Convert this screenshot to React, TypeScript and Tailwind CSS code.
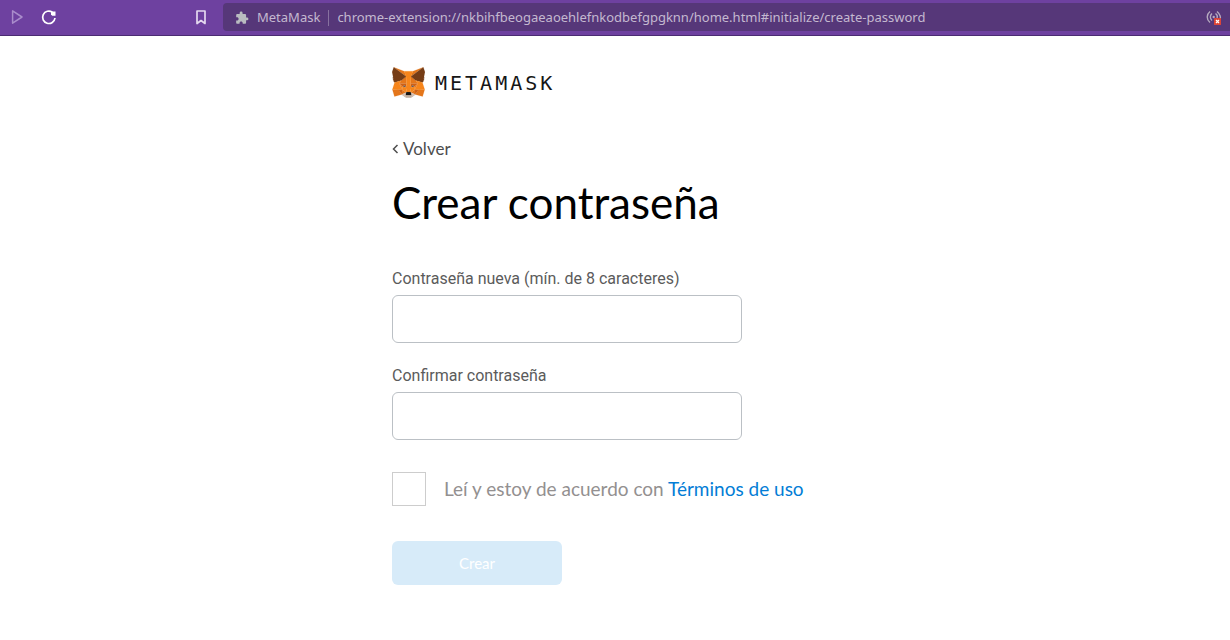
import React, { useState } from 'react'
import { MdExtension } from 'react-icons/md'

const foxShapes = [
  { fill: '#E2761B', points: '274.1,35.5 174.6,109.4 193,65.8' },
  { fill: '#E4761B', points: '44.4,35.5 143.1,110.1 125.6,65.8' },
  { fill: '#E4761B', points: '238.3,206.8 211.8,247.4 268.5,263 284.8,207.7' },
  { fill: '#E4761B', points: '33.9,207.7 50.1,263 106.8,247.4 80.3,206.8' },
  { fill: '#E4761B', points: '103.6,138.2 87.8,162.1 144.1,164.6 142.1,104.1' },
  { fill: '#E4761B', points: '214.9,138.2 175.9,103.4 174.6,164.6 230.8,162.1' },
  { fill: '#E4761B', points: '106.8,247.4 140.6,230.9 111.4,208.1' },
  { fill: '#E4761B', points: '177.9,230.9 211.8,247.4 207.1,208.1' },
  { fill: '#D7C1B3', points: '211.8,247.4 177.9,230.9 180.6,253 180.3,262.3' },
  { fill: '#D7C1B3', points: '106.8,247.4 138.3,262.3 138.1,253 140.6,230.9' },
  {
    fill: '#CD6116',
    points: '230.8,162.1 174.6,164.6 179.8,193.5 188.1,176.1 208.1,185.2',
  },
  {
    fill: '#CD6116',
    points: '110.6,185.2 130.6,176.1 138.8,193.5 144.1,164.6 87.8,162.1',
  },
  { fill: '#6A5B5B', points: '138.8,193.5 110.6,185.2 130.5,176.1' },
  { fill: '#6A5B5B', points: '179.7,193.5 188,176.1 208,185.2' },
  { fill: '#CD6116', points: '106.8,247.4 111.6,206.8 80.3,207.7' },
  { fill: '#CD6116', points: '207,206.8 211.8,247.4 238.3,207.7' },
  { fill: '#E4751F', points: '87.8,162.1 111.4,208.1 110.6,185.2' },
  { fill: '#E4751F', points: '208.1,185.2 207.1,208.1 230.8,162.1' },
  {
    fill: '#F6851B',
    points: '179.8,193.5 173.1,227.6 177.9,230.9 207.1,208.1 208.1,185.2',
  },
  {
    fill: '#F6851B',
    points: '110.6,185.2 111.4,208.1 140.6,230.9 145.4,227.6 138.8,193.5',
  },
  {
    fill: '#C0AD9E',
    points:
      '180.3,262.3 180.6,253 178.1,250.8 140.4,250.8 138.1,253 138.3,262.3 106.8,247.4 117.8,256.4 140.1,271.9 178.4,271.9 200.8,256.4 211.8,247.4',
  },
  {
    fill: '#161616',
    points:
      '177.9,230.9 173.1,227.6 145.4,227.6 140.6,230.9 138.1,253 140.4,250.8 178.1,250.8 180.6,253',
  },
  {
    fill: '#763D16',
    points:
      '278.3,114.2 286.8,73.4 274.1,35.5 177.9,106.9 214.9,138.2 267.2,153.5 278.8,140 273.8,136.4 281.8,129.1 275.6,124.3 283.6,118.2',
  },
  {
    fill: '#763D16',
    points:
      '31.8,73.4 40.3,114.2 34.9,118.2 42.9,124.3 36.8,129.1 44.8,136.4 39.8,140 51.3,153.5 103.6,138.2 140.6,106.9 44.4,35.5',
  },
  {
    fill: '#F6851B',
    points:
      '267.2,153.5 214.9,138.2 230.8,162.1 207.1,208.1 238.3,207.7 284.8,207.7',
  },
  {
    fill: '#F6851B',
    points:
      '103.6,138.2 51.3,153.5 33.9,207.7 80.3,207.7 111.4,208.1 87.8,162.1',
  },
  {
    fill: '#F6851B',
    points:
      '174.6,164.6 177.9,106.9 193.1,65.8 125.6,65.8 140.6,106.9 144.1,164.6 138.8,193.5 145.4,227.6 173.1,227.6 179.8,193.5',
  },
]

const Fox = () => (
  <svg viewBox="31 35 256 238" className="h-[31px] w-[33px]" aria-hidden="true">
    {foxShapes.map((shape) => (
      <polygon
        key={shape.points}
        points={shape.points}
        fill={shape.fill}
        stroke={shape.fill}
        strokeLinejoin="round"
      />
    ))}
  </svg>
)

const BrowserBar = () => (
  <header className="flex h-9 items-center border-b border-[#4b2c72] bg-[#6e41a0] pb-px">
    <div className="flex w-[223px] shrink-0 items-center justify-between pr-4 pl-[10px]">
      <div className="flex items-center gap-4">
        <button type="button" aria-label="Siguiente">
          <svg viewBox="0 0 14 16" className="h-4 w-[14px]">
            <path
              d="M2.6 1.8v12.4L12 8z"
              fill="none"
              stroke="#a98ccb"
              strokeWidth="1.5"
              strokeLinejoin="round"
            />
          </svg>
        </button>
        <button type="button" aria-label="Recargar">
          <svg viewBox="0 0 16 16" className="h-4 w-4">
            <path
              d="M12.4 3.2A6.200 6.200 0 1 0 15 9"
              fill="none"
              stroke="#fff"
              strokeWidth="1.7"
            />
            <path d="M11 2.500h4.500v4.300h-3.300L11 5.500z" fill="#fff" />
          </svg>
        </button>
      </div>
      <button type="button" aria-label="Marcadores">
        <svg viewBox="0 0 12 16" className="h-4 w-3">
          <path
            d="M2 2h8v12.500L6 11.500 2 14.500z"
            fill="none"
            stroke="#e4d9ef"
            strokeWidth="1.7"
            strokeLinejoin="round"
          />
        </svg>
      </button>
    </div>
    <div className="flex h-7 min-w-0 flex-1 items-center rounded-l bg-[#563779] pt-0.5 pr-2 pl-3 font-['Noto_Sans',sans-serif] text-[13px] text-[#c4b9d0]">
      <MdExtension className="mr-2 size-[14px] shrink-0 text-[#b9bcc0]" />
      <span>MetaMask</span>
      <span className="mx-2 h-4 w-px bg-[#87719f]" />
      <span className="truncate">
        chrome-extension://nkbihfbeogaeaoehlefnkodbefgpgknn/home.html#initialize/create-password
      </span>
      <svg viewBox="0 0 16 16" className="ml-auto h-4 w-4 shrink-0">
        <g fill="none" stroke="#b5aabf" strokeWidth="1.4">
          <path d="M4 1.500C.3 4.500.3 9.500 4 12.500M6 3.500C3.800 5.500 3.800 8.500 6 10.500" />
          <path d="M11 1.500C14.700 4.500 14.700 8 14 9M9.500 3.500C11.500 5 11.500 7 11 8" />
        </g>
        <circle cx="7.700" cy="7" r="1.200" fill="#b5aabf" />
        <rect x="8" y="8" width="7" height="7" rx=".5" fill="#dc4437" />
        <path d="M10 10l3 3M13 10l-3 3" stroke="#fff" strokeWidth="1.200" />
      </svg>
    </div>
  </header>
)

const PasswordField = ({ id, label }: { id: string; label: string }) => (
  <div className="flex flex-col gap-1">
    <label
      htmlFor={id}
      className="font-[Roboto,sans-serif] text-base leading-6 text-[#5b5b5b]"
    >
      {label}
    </label>
    <input
      id={id}
      type="password"
      className="h-12 w-full max-w-[350px] rounded-md border border-[#bbc0c5] bg-white px-4"
    />
  </div>
)

const App = () => {
  const [accepted, setAccepted] = useState(false)

  return (
    <div className="min-h-screen bg-white font-[Lato,sans-serif]">
      <BrowserBar />
      <main className="mx-auto w-full max-w-[446px] pt-[31px] pb-12">
        <div className="flex items-center gap-[10px]">
          <Fox />
          <span className="font-['DejaVu_Sans_Mono',monospace] text-xl leading-6 tracking-[3px] text-[#161616]">
            METAMASK
          </span>
        </div>

        <a
          href="#"
          className="mt-[39px] flex w-fit items-center gap-1 text-[17px] leading-6 text-[#4d4d4d]"
        >
          <svg viewBox="0 0 7 10" className="h-[10px] w-[7px]">
            <path
              d="M5.500 1L1.500 5l4 4"
              fill="none"
              stroke="currentColor"
              strokeWidth="1.500"
            />
          </svg>
          Volver
        </a>

        <h1 className="mt-[15px] text-[44px] leading-[52px] text-black">
          Crear contraseña
        </h1>

        <form className="mt-[39px]">
          <div className="flex flex-col gap-[21px]">
            <PasswordField
              id="new-password"
              label="Contraseña nueva (mín. de 8 caracteres)"
            />
            <PasswordField id="confirm-password" label="Confirmar contraseña" />
          </div>

          <div className="mt-8 flex items-center gap-[18px] text-[19px] leading-6 text-[#939090]">
            <input
              id="terms"
              type="checkbox"
              checked={accepted}
              onChange={() => setAccepted(!accepted)}
              className="size-[34px] shrink-0 appearance-none border border-[#cdcdcd] bg-white checked:bg-[#037dd6]"
            />
            <label htmlFor="terms">
              Leí y estoy de acuerdo con{' '}
              <a href="#" className="text-[#037dd6]">
                Términos de uso
              </a>
            </label>
          </div>

          <button
            type="submit"
            disabled={!accepted}
            className="mt-[35px] h-11 w-[170px] rounded-md bg-[#037dd6] text-[15px] text-white disabled:bg-[#d7ebf9]"
          >
            Crear
          </button>
        </form>
      </main>
    </div>
  )
}

export default App
